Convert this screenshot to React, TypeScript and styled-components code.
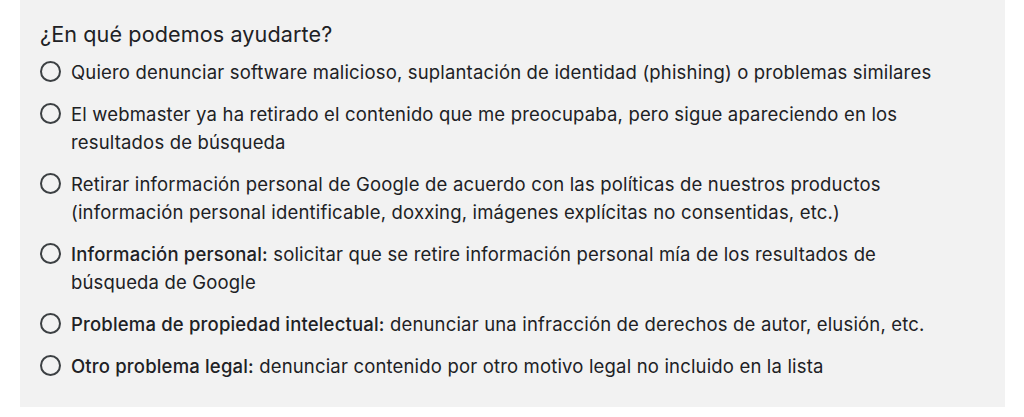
import React from "react";
import styled, { createGlobalStyle } from "styled-components";

const Global = createGlobalStyle`
  html, body { margin: 0; padding: 0; background: #ffffff; }
  body { font-family: Inter, Roboto, "Noto Sans", Arial, sans-serif; }
`;

const Panel = styled.section`
  margin-left: 20px;
  width: 985px;
  height: 407px;
  box-sizing: border-box;
  background: #f2f2f2;
  padding: 20px 60px 0 20px;
  color: #202124;
`;

const Heading = styled.h2`
  margin: 0 0 10px 0;
  font-size: 21.6px;
  font-weight: 400;
  line-height: 28px;
  letter-spacing: 0.1px;
`;

const List = styled.div`
  display: flex;
  flex-direction: column;
  gap: 14px;
`;

const Option = styled.label`
  display: flex;
  align-items: flex-start;
  gap: 10px;
  font-size: 18.5px;
  line-height: 28px;
  letter-spacing: 0.17px;
  cursor: pointer;
`;

const Radio = styled.span`
  flex: 0 0 auto;
  width: 21px;
  height: 21px;
  margin-top: 3px;
  box-sizing: border-box;
  border: 2px solid #3c4043;
  border-radius: 50%;
`;

const Text = styled.span`
  flex: 1;
`;

const Strong = styled.strong`
  font-weight: 500;
`;

const options: { bold?: string; text: string }[] = [
  { text: "Quiero denunciar software malicioso, suplantación de identidad (phishing) o problemas similares" },
  { text: "El webmaster ya ha retirado el contenido que me preocupaba, pero sigue apareciendo en los resultados de búsqueda" },
  { text: "Retirar información personal de Google de acuerdo con las políticas de nuestros productos (información personal identificable, doxxing, imágenes explícitas no consentidas, etc.)" },
  { bold: "Información personal:", text: " solicitar que se retire información personal mía de los resultados de búsqueda de Google" },
  { bold: "Problema de propiedad intelectual:", text: " denunciar una infracción de derechos de autor, elusión, etc." },
  { bold: "Otro problema legal:", text: " denunciar contenido por otro motivo legal no incluido en la lista" },
];

export default function App() {
  return (
    <>
      <Global />
      <Panel>
        <Heading>¿En qué podemos ayudarte?</Heading>
        <List>
          {options.map((o, i) => (
            <Option key={i}>
              <Radio />
              <Text>
                {o.bold && <Strong>{o.bold}</Strong>}
                {o.text}
              </Text>
            </Option>
          ))}
        </List>
      </Panel>
    </>
  );
}
